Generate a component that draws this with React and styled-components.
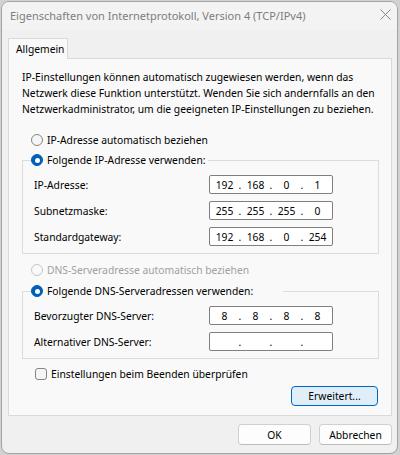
import React from 'react';
import styled, { createGlobalStyle } from 'styled-components';

const GlobalStyle = createGlobalStyle`
  body {
    margin: 0;
    background: #d2d2d2;
    font-family: "Noto Sans", "Open Sans", sans-serif;
    font-size: 10.3px;
    color: #000;
  }
`;

const Dialog = () => (
  <Window>
    <TitleBar>
      <Title>Eigenschaften von Internetprotokoll, Version 4 (TCP/IPv4)</Title>
      <CloseIcon width="11" height="11" viewBox="0 0 11 11">
        <path d="M0.5 0.5 L10.5 10.5 M10.5 0.5 L0.5 10.5" stroke="#8a8a8a" strokeWidth="1" fill="none" />
      </CloseIcon>
    </TitleBar>
    <Body>
      <TabStrip>
        <Tab>Allgemein</Tab>
      </TabStrip>
      <Panel>
        <Description>
          IP-Einstellungen können automatisch zugewiesen werden, wenn das<br />
          Netzwerk diese Funktion unterstützt. Wenden Sie sich andernfalls an den<br />
          Netzwerkadministrator, um die geeigneten IP-Einstellungen zu beziehen.
        </Description>

        <RadioRow $mt={15}>
          <Radio />
          <span>IP-Adresse automatisch beziehen</span>
        </RadioRow>

        <Group $mt={4}>
          <Legend>
            <RadioRow as="span">
              <Radio $checked />
              <span>Folgende IP-Adresse verwenden:</span>
            </RadioRow>
          </Legend>
          <Fields>
            <FieldLabel>IP-Adresse:</FieldLabel>
            <IpField octets={['192', '168', '0', '1']} />
            <FieldLabel>Subnetzmaske:</FieldLabel>
            <IpField octets={['255', '255', '255', '0']} />
            <FieldLabel>Standardgateway:</FieldLabel>
            <IpField octets={['192', '168', '0', '254']} />
          </Fields>
        </Group>

        <RadioRow $mt={8} $disabled>
          <Radio $disabled />
          <span>DNS-Serveradresse automatisch beziehen</span>
        </RadioRow>

        <Group $mt={5}>
          <Legend $width={252}>
            <RadioRow as="span">
              <Radio $checked />
              <span>Folgende DNS-Serveradressen verwenden:</span>
            </RadioRow>
          </Legend>
          <Fields>
            <FieldLabel>Bevorzugter DNS-Server:</FieldLabel>
            <IpField octets={['8', '8', '8', '8']} />
            <FieldLabel>Alternativer DNS-Server:</FieldLabel>
            <IpField octets={['', '', '', '']} />
          </Fields>
        </Group>

        <CheckRow>
          <CheckBox />
          <span>Einstellungen beim Beenden überprüfen</span>
        </CheckRow>

        <AdvancedButton>Erweitert...</AdvancedButton>
      </Panel>

      <Footer>
        <Button>OK</Button>
        <Button>Abbrechen</Button>
      </Footer>
    </Body>
  </Window>
);

const IpField = ({ octets }) => (
  <IpBox>
    {octets.map((o, i) => (
      <React.Fragment key={i}>
        {i > 0 && <Dot>.</Dot>}
        <Octet>{o}</Octet>
      </React.Fragment>
    ))}
  </IpBox>
);

export default function App() {
  return (
    <>
      <GlobalStyle />
      <Dialog />
    </>
  );
}

const Window = styled.div`
  box-sizing: border-box;
  width: 397px;
  height: 453px;
  margin: 1px 0 0 1px;
  background: #f0f0f0;
  border: 1px solid #a3a3a3;
  border-radius: 8px;
  overflow: hidden;
  display: flex;
  flex-direction: column;
`;

const TitleBar = styled.div`
  box-sizing: border-box;
  height: 28px;
  display: flex;
  align-items: flex-start;
  justify-content: space-between;
  padding: 6px 6px 0 8px;
  background: #f3f3f3;
`;

const Title = styled.span`
  line-height: 16px;
  font-size: 11px;
  color: #7d7d7d;
`;

const CloseIcon = styled.svg`
  margin-top: 1px;
`;

const Body = styled.div`
  display: flex;
  flex-direction: column;
  padding: 8px 5px 0 6px;
`;

const TabStrip = styled.div`
  display: flex;
`;

const Tab = styled.div`
  box-sizing: border-box;
  position: relative;
  z-index: 1;
  width: 60px;
  height: 21px;
  margin-bottom: -1px;
  padding: 2px 0 0 7px;
  line-height: 16px;
  background: #f9f9f9;
  border: 1px solid #d9d9d9;
  border-bottom: none;
`;

const Panel = styled.div`
  display: flex;
  flex-direction: column;
  background: #f9f9f9;
  border: 1px solid #d9d9d9;
  padding: 10px 12px 9px 13px;
`;

const Description = styled.p`
  margin: 0;
  line-height: 16px;
  white-space: nowrap;
`;

const RadioRow = styled.div`
  display: flex;
  align-items: center;
  gap: 4px;
  height: 16px;
  line-height: 16px;
  margin-top: ${p => p.$mt || 0}px;
  margin-left: ${p => (p.as ? 0 : 9)}px;
  color: ${p => (p.$disabled ? '#a0a0a0' : '#000')};
  white-space: nowrap;
`;

const Radio = styled.span`
  box-sizing: border-box;
  width: 12px;
  height: 12px;
  border-radius: 50%;
  flex-shrink: 0;
  display: flex;
  align-items: center;
  justify-content: center;
  background: ${p => (p.$checked ? '#005fb8' : p.$disabled ? '#f9f9f9' : '#f5f5f5')};
  border: 1px solid ${p => (p.$checked ? '#005fb8' : p.$disabled ? '#c6c6c6' : '#858585')};

  &::after {
    content: '';
    display: ${p => (p.$checked ? 'block' : 'none')};
    width: 5px;
    height: 5px;
    border-radius: 50%;
    background: #fff;
  }
`;

const Group = styled.fieldset`
  margin: ${p => p.$mt}px 0 0 0;
  padding: 7px 0 7px 11px;
  border: 1px solid #dcdcdc;
  min-width: 0;
`;

const Legend = styled.legend`
  box-sizing: border-box;
  width: ${p => (p.$width ? `${p.$width}px` : 'auto')};
  padding: 0 2px 0 0;
  margin-left: -3px;
  background: #f9f9f9;
`;

const Fields = styled.div`
  display: grid;
  grid-template-columns: 175px 124px;
  row-gap: 7px;
  align-items: center;
`;

const FieldLabel = styled.span`
  line-height: 16px;
  white-space: nowrap;
`;

const IpBox = styled.div`
  box-sizing: border-box;
  width: 124px;
  height: 19px;
  display: flex;
  align-items: center;
  padding: 0 2px;
  background: #fff;
  border: 1px solid #7f7f7f;
  border-radius: 2px;
`;

const Octet = styled.span`
  width: 25px;
  text-align: center;
  line-height: 16px;
`;

const Dot = styled.span`
  width: 6px;
  text-align: center;
  line-height: 16px;
`;

const CheckRow = styled.div`
  display: flex;
  align-items: center;
  gap: 4px;
  height: 16px;
  margin: 7px 0 0 13px;
  white-space: nowrap;
`;

const CheckBox = styled.span`
  box-sizing: border-box;
  width: 12px;
  height: 12px;
  border: 1px solid #858585;
  border-radius: 3px;
  background: #f5f5f5;
`;

const Button = styled.button`
  box-sizing: border-box;
  width: 73px;
  height: 21px;
  padding: 0;
  font-family: inherit;
  font-size: 10.3px;
  color: #000;
  background: #fdfdfd;
  border: 1px solid #d0d0d0;
  border-bottom-color: #bcbcbc;
  border-radius: 4px;
`;

const AdvancedButton = styled(Button)`
  align-self: flex-end;
  width: 87px;
  height: 20px;
  margin: 4px 1px 0 0;
  background: #e0eef9;
  border: 1px solid #0067c0;
`;

const Footer = styled.div`
  display: flex;
  justify-content: flex-end;
  gap: 8px;
  margin-top: 8px;
`;
